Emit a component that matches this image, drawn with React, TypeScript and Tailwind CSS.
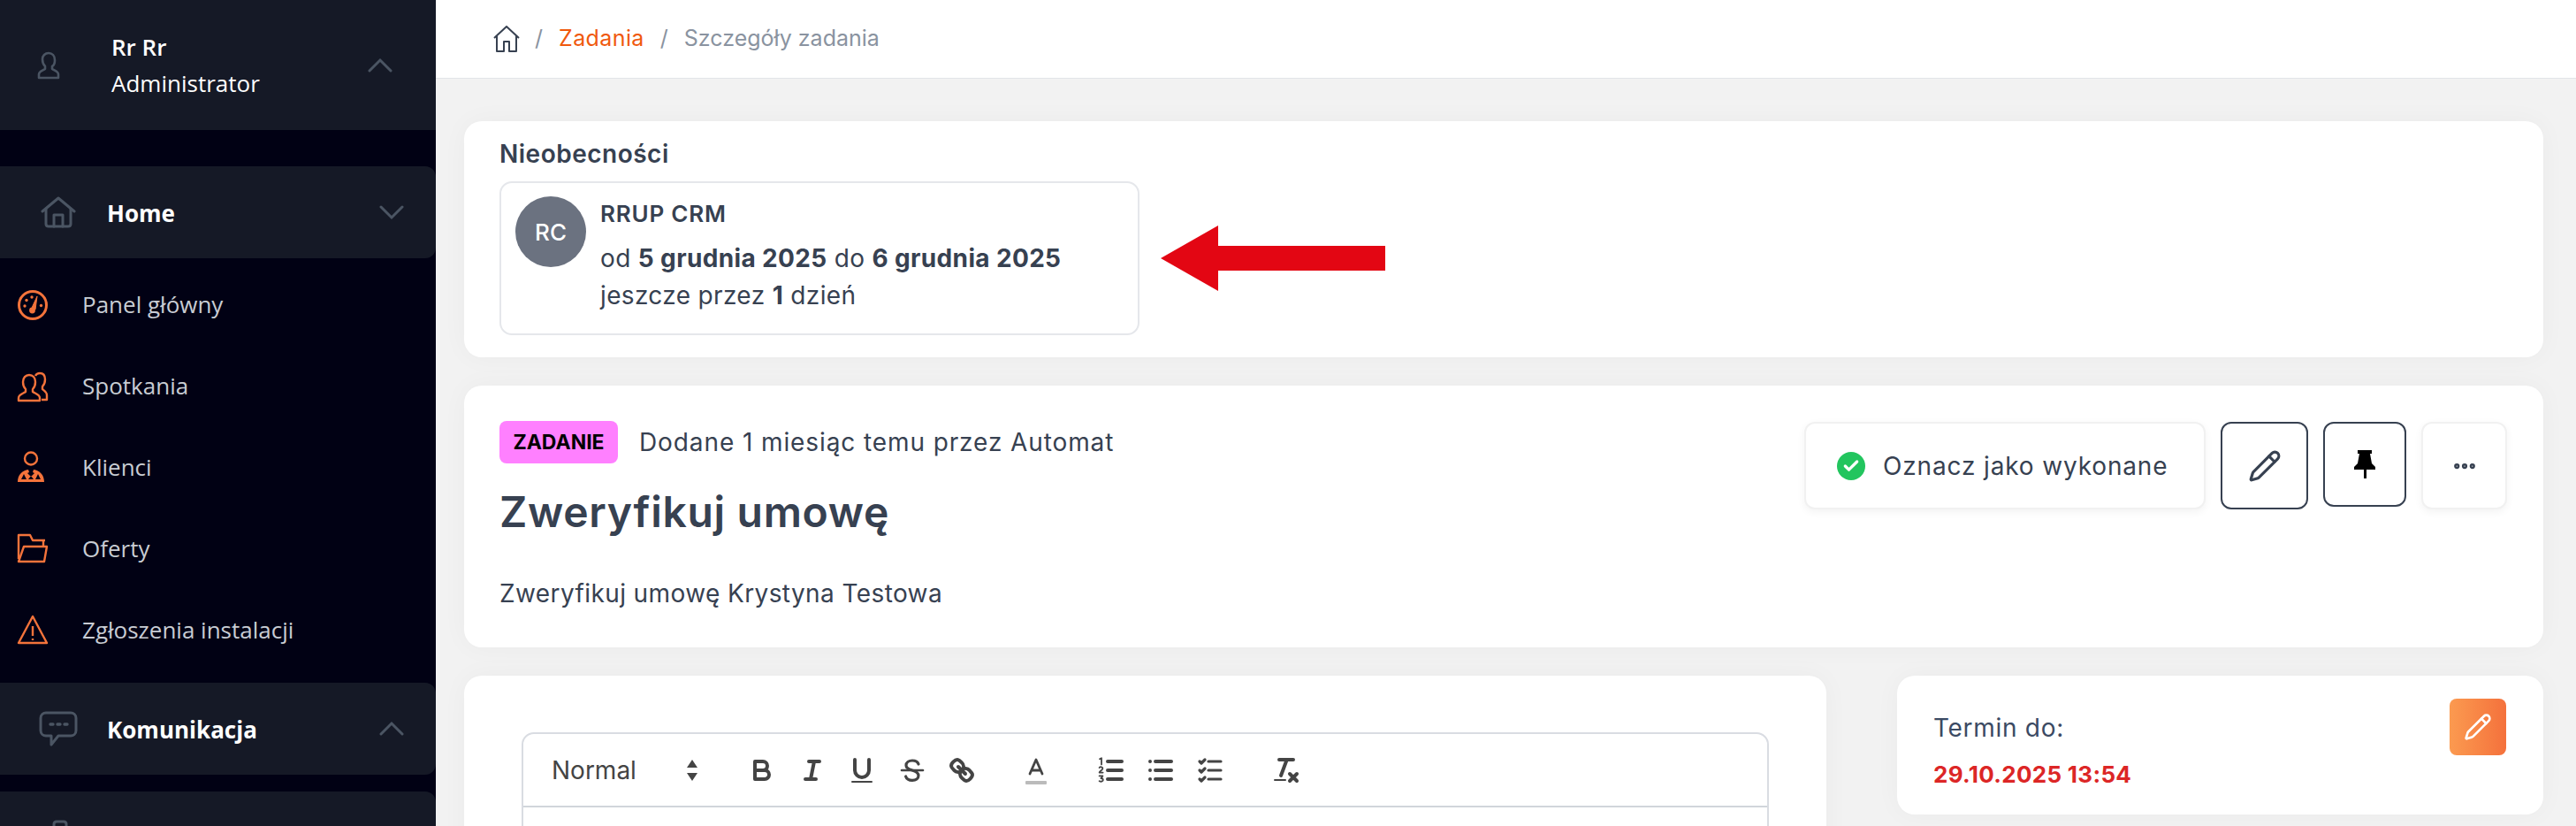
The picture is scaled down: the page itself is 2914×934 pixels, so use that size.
import { Check, Ellipsis, Pencil } from 'lucide-react';
import type { ReactNode } from 'react';

const sideFont = 'font-["Open_Sans",sans-serif]';

const ChevronUp = () => (
  <svg width="28" height="17" viewBox="0 0 28 17" fill="none" stroke="#4b5563" strokeWidth="3" strokeLinecap="round">
    <path d="M2 15 14 3l12 12" />
  </svg>
);

const ChevronDown = () => (
  <svg width="28" height="17" viewBox="0 0 28 17" fill="none" stroke="#4b5563" strokeWidth="3" strokeLinecap="round">
    <path d="M2 2l12 12L26 2" />
  </svg>
);

const navIcons: Record<string, ReactNode> = {
  panel: (
    <>
      <circle cx="18" cy="18" r="15.5" strokeWidth="3" />
      <path d="M16.5 22 23 8l-2 15z" fill="currentColor" strokeWidth="1" />
      <circle cx="17.5" cy="24" r="3.4" fill="currentColor" stroke="none" />
      <circle cx="9" cy="19" r="1.7" fill="currentColor" stroke="none" />
      <circle cx="11" cy="12.5" r="1.7" fill="currentColor" stroke="none" />
      <circle cx="17" cy="9" r="1.7" fill="currentColor" stroke="none" />
      <circle cx="27.5" cy="18.5" r="1.7" fill="currentColor" stroke="none" />
    </>
  ),
  users: (
    <>
      <path d="M2 34v-3c0-4 5-5 8-7v-3c-2-2-3-5-3-8 0-5 3-8 7-8s7 3 7 8c0 3-1 6-3 8v3c3 2 8 3 8 7v3z" />
      <path d="M21 6c1-2 3-3 5-3 4 0 6 3 6 7 0 3-1 6-3 8v3c2 2 5 3 5 7v5h-6" />
    </>
  ),
  clients: (
    <>
      <circle cx="16" cy="8.500" r="7" />
      <path
        d="M1 35C1 27 6 22 13 21l1 3-2 1 3 3 2 0 3-3-2-1 1-3C26 22 31 27 31 35ZM5 32h6l-3-6ZM21 32h6l-3-6ZM13 32h6l-3-4Z"
        fill="currentColor"
        fillRule="evenodd"
        stroke="none"
      />
    </>
  ),
  folder: (
    <>
      <path d="M2 30V3h13l3 6h14" />
      <path d="M2 33h29l3-17H8z" />
      <path d="M30 9v6" />
    </>
  ),
  alert: (
    <>
      <path d="M18 3 2 33h32z" />
      <path d="M18 14v11M18 28v2" />
    </>
  ),
};

const NavItem = ({ icon, label }: { icon: string; label: string }) => (
  <div className="flex items-center h-[91.8px] pl-[19px] text-[26px] text-[#c8ccd3]">
    <svg
      width="36"
      height="36"
      viewBox="0 0 36 36"
      fill="none"
      stroke="currentColor"
      strokeWidth="2.4"
      strokeLinejoin="round"
      className="text-[#f4733b] shrink-0"
    >
      {navIcons[icon]}
    </svg>
    <span className="ml-[39px] -translate-x-px">{label}</span>
  </div>
);

const NavGroup = ({ icon, label, open }: { icon: ReactNode; label: string; open?: boolean }) => (
  <div className="flex items-center h-[104px] bg-[#151926] rounded-r-[12px] shrink-0">
    <div className="w-[122px] pl-[46px] shrink-0">{icon}</div>
    <span className="flex-1 text-[26px] font-bold text-white pt-[3px] -ml-px">{label}</span>
    <div className="pr-[36px] flex">{open ? <ChevronUp /> : <ChevronDown />}</div>
  </div>
);

const Sidebar = () => (
  <aside className={`w-[493px] h-full shrink-0 bg-[#010114] flex flex-col overflow-hidden ${sideFont}`}>
    <div className="h-[147px] bg-[#151926] flex items-center shrink-0">
      <svg width="26" height="32" viewBox="0 0 26 32" fill="none" stroke="#4b5563" strokeWidth="2.6" className="ml-[42px] mr-[58px] shrink-0">
        <path d="M2 30v-4c0-3 4-4 7-6v-3c-2-2-3-5-3-8 0-4 3-7 7-7s7 3 7 8c0 3-1 6-3 7v3c3 2 7 3 7 6v4z" strokeLinejoin="round" />
      </svg>
      <div className="flex-1 text-white text-[26px] leading-[41px]">
        <div className="font-semibold">Rr Rr</div>
        <div>Administrator</div>
      </div>
      <div className="pr-[49px] flex">
        <ChevronUp />
      </div>
    </div>
    <div className="mt-[41px]">
      <NavGroup
        label="Home"
        icon={
          <svg width="40" height="36" viewBox="0 0 40 36" fill="none" stroke="#4b5563" strokeWidth="3" strokeLinejoin="round" strokeLinecap="round">
            <path d="M2 17 20 2l18 15" />
            <path d="M6 14v17c0 2 1 3 3 3h22c2 0 3-1 3-3V14" />
            <path d="M15 34V21h10v13" />
          </svg>
        }
      />
    </div>
    <div className="pt-[7px] pb-[14px] shrink-0">
      <NavItem icon="panel" label="Panel główny" />
      <NavItem icon="users" label="Spotkania" />
      <NavItem icon="clients" label="Klienci" />
      <NavItem icon="folder" label="Oferty" />
      <NavItem icon="alert" label="Zgłoszenia instalacji" />
    </div>
    <NavGroup
      open
      label="Komunikacja"
      icon={
        <svg width="44" height="40" viewBox="0 0 44 40" fill="none" stroke="#4b5563" strokeWidth="3" strokeLinejoin="round" className="-ml-[2px]">
          <path d="M8 2h28c3 0 6 2 6 6v14c0 4-3 6-6 6H22l-8 10v-10H8c-3 0-6-2-6-6V8c0-4 3-6 6-6z" />
          <path d="M13 15h3M21 15h3M29 15h3" strokeLinecap="round" strokeWidth="3.4" />
        </svg>
      }
    />
    <div className="mt-[19px] shrink-0">
      <NavGroup
        label=""
        open
        icon={
          <svg width="40" height="36" viewBox="0 0 40 36" fill="none" stroke="#4b5563" strokeWidth="3" className="mt-[-4px] ml-[2px]">
            <path d="M13 9V5c0-2 1-3 3-3h8c2 0 3 1 3 3v4" />
            <rect x="2" y="9" width="36" height="25" rx="3" />
          </svg>
        }
      />
    </div>
  </aside>
);

const Card = ({ className, children }: { className: string; children: ReactNode }) => (
  <section className={`bg-white rounded-[20px] shadow-[0_0_30px_rgba(0,0,0,0.035)] ${className}`}>{children}</section>
);

const ActionBox = ({ className, children }: { className: string; children: ReactNode }) => (
  <button className={`flex items-center justify-center rounded-[12px] bg-white ${className}`}>{children}</button>
);

const qlIcons: ReactNode[] = [
  <>
    <path d="M5,4H9.5A2.5,2.5,0,0,1,12,6.5v0A2.5,2.5,0,0,1,9.5,9H5V4Z" />
    <path d="M5,9h5.5A2.5,2.5,0,0,1,13,11.5v0A2.5,2.5,0,0,1,10.5,14H5V9Z" />
  </>,
  <path d="M7 4h6M5 14h6M8 14l2-10" />,
  <>
    <path d="M5,3V9a4,4,0,0,0,4,4h0a4,4,0,0,0,4-4V3" />
    <path d="M3.5 15.5h11" strokeWidth="1" />
  </>,
  <>
    <path d="M3 9h12" strokeWidth="1.3" />
    <path d="M12.5 5.5C12 4 10.5 3.5 9 3.5c-2 0-3.5 1-3.5 2.7C5.500 8 7.500 8.500 9 9c2 .6 3.500 1.200 3.500 3 0 1.700-1.500 2.700-3.500 2.700-1.700 0-3.200-.7-3.700-2.200" strokeWidth="1.600" />
  </>,
  <>
    <path d="M7 7l4 4" />
    <path d="M8.900,4.577a3.476,3.476,0,0,1,.36,4.679A3.476,3.476,0,0,1,4.577,8.900C3.185,7.500,2.035,6.400,4.217,4.217S7.500,3.185,8.900,4.577Z" />
    <path d="M13.423,9.100a3.476,3.476,0,0,0-4.679-.36,3.476,3.476,0,0,0,.36,4.679c1.392,1.392,2.500,2.542,4.679.36S14.815,10.500,13.423,9.100Z" />
  </>,
];

const ListIcons: ReactNode[] = [
  <>
    <path d="M7 4h8M7 9h8M7 14h8" />
    <path d="M2.500 2.600l1-.5v3.600M2.300 7.500c.5-.6 1.900-.5 1.900.5s-1.900 1.500-1.900 2.300h2M2.300 12.200h1.900l-1 1.300c1 0 1.200.5 1.200 1s-.8 1.300-2.100.6" strokeWidth="0.9" />
  </>,
  <path d="M6 4h9M6 9h9M6 14h9M3 4h0M3 9h0M3 14h0" />,
  <path d="M8 4h7M8 9h7M8 14h7M3 4l1 1 2-2M3 9l1 1 2-2M3 14l1 1 2-2" strokeWidth="1.600" />,
];

const QlIcon = ({ children, className }: { children: ReactNode; className?: string }) => (
  <svg
    width="36"
    height="36"
    viewBox="0 0 18 18"
    fill="none"
    stroke="#444"
    strokeWidth="2"
    strokeLinecap="round"
    strokeLinejoin="round"
    className={className}
  >
    {children}
  </svg>
);

const EditorToolbar = () => (
  <div className="h-[83px] border-b-2 border-[#d1d5db] flex items-center pl-[32px] text-[#444]">
    <span className="text-[28px] leading-[40px] w-[151px]">Normal</span>
    <svg width="16" height="26" viewBox="0 0 16 26" fill="#444" className="mr-[53px]">
      <path d="M8 1l6 9H2zM8 25l6-9H2z" />
    </svg>
    <div className="flex gap-[20.500px]">
      {qlIcons.map((icon, idx) => (
        <QlIcon key={idx}>{icon}</QlIcon>
      ))}
    </div>
    <QlIcon className="ml-[48px]">
      <path d="M5.500 11 9 3l3.500 8M6.400 9h5.200" strokeWidth="1.400" />
      <rect x="3" y="15" width="12" height="2" rx="0.500" fill="#bbb" stroke="none" />
    </QlIcon>
    <div className="flex gap-[20px] ml-[49px]">
      {ListIcons.map((icon, idx) => (
        <QlIcon key={idx}>{icon}</QlIcon>
      ))}
    </div>
    <QlIcon className="ml-[50px]">
      <path d="M5 3h8M6 12 9.350 3M11 11l4 4M15 11l-4 4" />
      <path d="M2.500 14.500h6" strokeWidth="1" />
    </QlIcon>
  </div>
);

const App = () => (
  <div className="w-[2914px] h-[934px] flex overflow-hidden bg-[#f2f2f2] font-['Inter',sans-serif] text-[#374151]">
    <Sidebar />
    <main className="flex-1 min-w-0 flex flex-col">
      <header className="h-[89px] shrink-0 bg-white border-b border-[#e2e4e8] flex items-center pl-[65px] text-[25px]">
        <svg width="30" height="30" viewBox="0 0 30 30" fill="none" stroke="#374151" strokeWidth="2" strokeLinejoin="round">
          <path d="M1 14 15 1l14 13" />
          <path d="M4 11v18h8V18h6v11h8V11" />
        </svg>
        <span className="ml-[17px] text-[#8a93a0]">/</span>
        <span className="ml-[18px] text-[#f0590e] tracking-[0.4px]">Zadania</span>
        <span className="ml-[18px] text-[#8a93a0]">/</span>
        <span className="ml-[18px] text-[#8a93a0]">Szczegóły zadania</span>
      </header>

      <div className="flex flex-col gap-[32px] pt-[48px] pl-[32px] pr-[37px]">
        <Card className="h-[267px] pt-[22px] pl-[40px] shrink-0">
          <h2 className="text-[28px] leading-[30px] font-semibold tracking-[0.5px]">Nieobecności</h2>
          <div className="flex items-center mt-[16px]">
            <div className="w-[724px] h-[174px] border-2 border-[#e5e7eb] rounded-[14px] flex pl-[16px] pt-[15px]">
              <div className="w-[80px] h-[80px] rounded-full bg-[#6b7280] text-white text-[26px] font-medium flex items-center justify-center shrink-0">
                RC
              </div>
              <div className="ml-[16px] text-[28px] leading-[42px] tracking-[0.35px]">
                <div className="font-semibold text-[26px] leading-[40px] tracking-[0.8px]">RRUP CRM</div>
                <div className="mt-[9px]">
                  od <b className="font-bold">5 grudnia 2025</b> do <b className="font-bold">6 grudnia 2025</b>
                </div>
                <div>
                  jeszcze przez <b className="font-bold">1</b> dzień
                </div>
              </div>
            </div>
            <svg width="254" height="74" viewBox="0 0 254 74" fill="#e30613" className="ml-[24px]">
              <path d="M0 37 65 0v23h189v28H65v23z" />
            </svg>
          </div>
        </Card>

        <Card className="h-[296px] pt-[40px] pl-[40px] pr-[41px] flex justify-between shrink-0">
          <div>
            <div className="flex items-center">
              <span className="w-[134px] h-[48px] rounded-[8px] bg-[#ff80ff] text-black text-[23px] font-bold flex items-center justify-center">
                ZADANIE
              </span>
              <span className="ml-[24px] text-[28px] leading-[39px] tracking-[0.9px]">Dodane 1 miesiąc temu przez Automat</span>
            </div>
            <h1 className="text-[48px] leading-[60px] font-semibold mt-[25px] tracking-[0.7px]">Zweryfikuj umowę</h1>
            <p className="text-[28px] leading-[39px] mt-[43px] tracking-[0.4px]">Zweryfikuj umowę Krystyna Testowa</p>
          </div>
          <div className="flex items-start gap-[17px] pt-[1px]">
            <ActionBox className="w-[454px] h-[99px] border-2 border-[#f1f1f1] shadow-[0_3px_10px_rgba(0,0,0,0.05)] text-[28px] tracking-[0.85px] justify-start! pl-[35px]">
              <span className="w-[32px] h-[32px] rounded-full bg-[#22c55e] flex items-center justify-center mr-[20px]">
                <Check size={20} color="white" strokeWidth={4} />
              </span>
              Oznacz jako wykonane
            </ActionBox>
            <ActionBox className="w-[99px] h-[99px] border-2 border-[#374151]">
              <Pencil size={38} strokeWidth={2} />
            </ActionBox>
            <ActionBox className="w-[94px] h-[96px] border-2 border-[#374151]">
              <svg width="24" height="32" viewBox="0 0 24 32" fill="black">
                <path d="M4 0h16v4h-2l2 11 4 4v3H14v10h-3V22H0v-3l4-4 2-11H4z" />
              </svg>
            </ActionBox>
            <ActionBox className="w-[97px] h-[99px] border-2 border-[#f1f1f1] shadow-[0_3px_10px_rgba(0,0,0,0.05)]">
              <Ellipsis size={30} strokeWidth={3} />
            </ActionBox>
          </div>
        </Card>

        <div className="flex gap-[80px]">
          <Card className="w-[1541px] h-[400px] pt-[64px] pl-[65px] pr-[65px] shrink-0">
            <div className="border-2 border-[#d9dce2] rounded-t-[14px]">
              <EditorToolbar />
              <div className="h-[200px]" />
            </div>
          </Card>
          <Card className="flex-1 h-[157px] flex justify-between pl-[41px] pr-[42px] pt-[26px]">
            <div className="pt-[13px]">
              <div className="text-[28px] leading-[40px] tracking-[0.7px] text-[#3b4a63]">Termin do:</div>
              <div className="text-[26px] leading-[40px] mt-[13px] font-bold text-[#dc2626] tracking-[0.3px]">29.10.2025 13:54</div>
            </div>
            <button className="w-[64px] h-[64px] rounded-[8px] bg-gradient-to-r from-[#fb9a50] to-[#f4713c] flex items-center justify-center">
              <Pencil size={32} color="white" strokeWidth={2} />
            </button>
          </Card>
        </div>
      </div>
    </main>
  </div>
);

export default App;
